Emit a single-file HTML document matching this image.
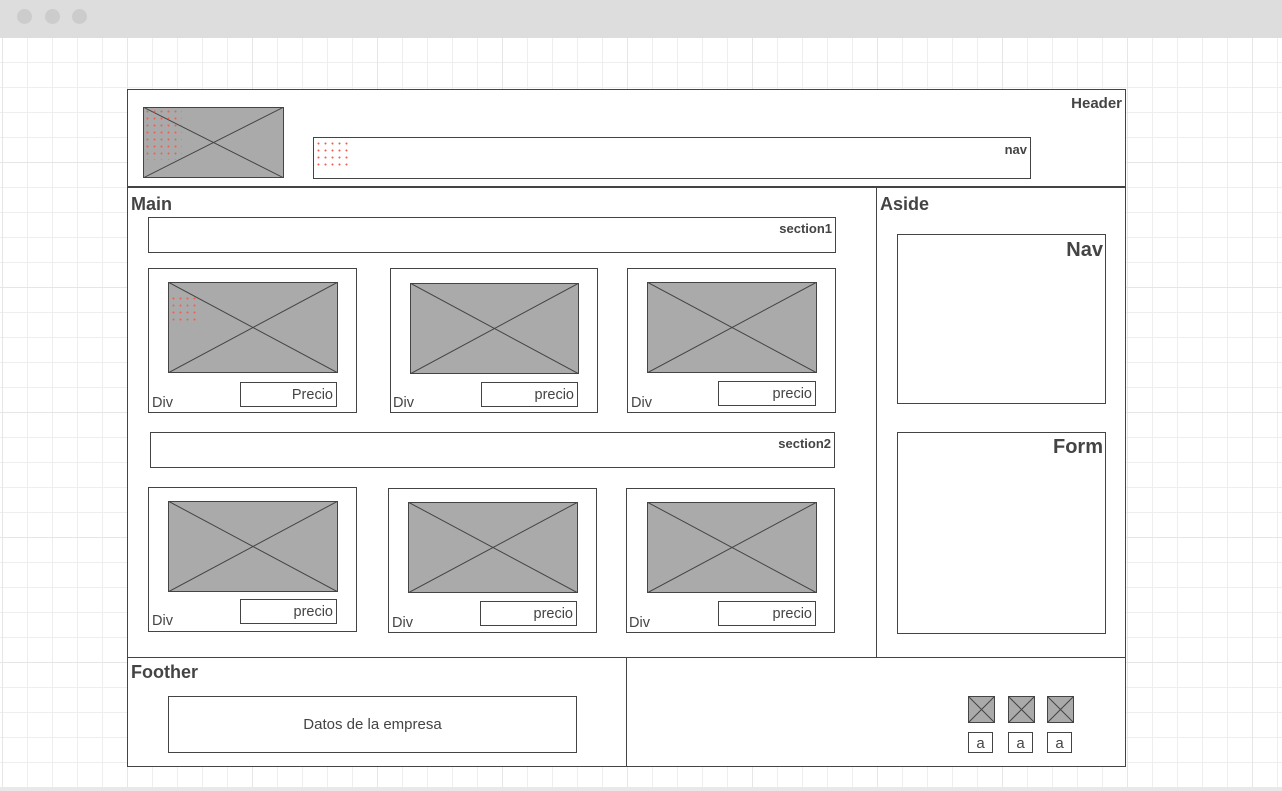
<!DOCTYPE html>
<html><head><meta charset="utf-8"><style>
*{margin:0;padding:0;box-sizing:border-box}
body{width:1282px;height:791px;overflow:hidden;position:relative;font-family:"Liberation Sans",sans-serif;color:#444;
background-color:#fff;
background-image:linear-gradient(#e6e6e6 1px,transparent 1px),linear-gradient(90deg,#e6e6e6 1px,transparent 1px),linear-gradient(#eeeeee 1px,transparent 1px),linear-gradient(90deg,#eeeeee 1px,transparent 1px);
background-size:125px 125px,125px 125px,25px 25px,25px 25px;
background-position:127px 162px,127px 162px,2px 12px,2px 12px;}
.top{position:absolute;left:0;top:0;width:1282px;height:38px;background:#ddd}
.dot{position:absolute;top:9px;width:15px;height:15px;border-radius:50%;background:#ccc}
.bot{position:absolute;left:0;top:787px;width:1282px;height:4px;background:#e8e8e8}
.b{position:absolute;border:1px solid #444;background:#fff}
.t{position:absolute;font-weight:bold;white-space:nowrap}
.r{position:absolute;font-weight:bold;white-space:nowrap;text-align:right}
.img{position:absolute}
.p{position:absolute;border:1px solid #444;background:#fff;font-size:14.5px;text-align:right;padding-right:3px;line-height:24px}
.d{position:absolute;font-size:14.5px}
.dots{position:absolute;background-image:radial-gradient(circle,#f06050 0.8px,transparent 1.2px);background-size:7px 7px}
</style></head><body>
<div class="top"><div class="dot" style="left:17px"></div><div class="dot" style="left:45px"></div><div class="dot" style="left:72px"></div></div>
<div class="bot"></div>

<div class="b" style="left:127px;top:89px;width:999px;height:678px"></div>
<div style="position:absolute;left:127px;top:186px;width:999px;height:2px;background:#444"></div>
<div style="position:absolute;left:876px;top:187px;width:1px;height:470px;background:#444"></div>
<div style="position:absolute;left:127px;top:657px;width:999px;height:1px;background:#444"></div>
<div style="position:absolute;left:626px;top:657px;width:1px;height:110px;background:#444"></div>

<svg class="img" style="left:143px;top:107px" width="141" height="71"><rect x=".5" y=".5" width="140" height="70" fill="#aaa" stroke="#444"/><path d="M0 0L141 71M0 71L141 0" stroke="#444"/></svg>
<div class="dots" style="left:144px;top:108px;width:38px;height:52px"></div>
<div class="r" style="right:160px;top:95px;font-size:15px">Header</div>
<div class="b" style="left:313px;top:137px;width:718px;height:42px"></div>
<div class="dots" style="left:315px;top:140px;width:37px;height:30px"></div>
<div class="r" style="right:255px;top:142px;font-size:13px">nav</div>

<div class="t" style="left:131px;top:194px;font-size:18px">Main</div>
<div class="t" style="left:880px;top:194px;font-size:18px">Aside</div>

<div class="b" style="left:148px;top:217px;width:688px;height:36px"></div>
<div class="r" style="right:450px;top:221px;font-size:13px">section1</div>
<div class="b" style="left:150px;top:432px;width:685px;height:36px"></div>
<div class="r" style="right:451px;top:436px;font-size:13px">section2</div>

<!-- row1 -->
<div class="b" style="left:148px;top:268px;width:209px;height:145px"></div>
<div class="b" style="left:390px;top:268px;width:208px;height:145px"></div>
<div class="b" style="left:627px;top:268px;width:209px;height:145px"></div>
<svg class="img" style="left:168px;top:282px" width="170" height="91"><rect x=".5" y=".5" width="169" height="90" fill="#aaa" stroke="#444"/><path d="M0 0L170 91M0 91L170 0" stroke="#444"/></svg>
<div class="dots" style="left:170px;top:295px;width:30px;height:28px"></div>
<svg class="img" style="left:410px;top:283px" width="169" height="91"><rect x=".5" y=".5" width="168" height="90" fill="#aaa" stroke="#444"/><path d="M0 0L169 91M0 91L169 0" stroke="#444"/></svg>
<svg class="img" style="left:647px;top:282px" width="170" height="91"><rect x=".5" y=".5" width="169" height="90" fill="#aaa" stroke="#444"/><path d="M0 0L170 91M0 91L170 0" stroke="#444"/></svg>
<div class="p" style="left:240px;top:382px;width:97px;height:25px">Precio</div>
<div class="p" style="left:481px;top:382px;width:97px;height:25px">precio</div>
<div class="p" style="left:718px;top:381px;width:98px;height:25px">precio</div>
<div class="d" style="left:152px;top:395px">Div</div>
<div class="d" style="left:393px;top:395px">Div</div>
<div class="d" style="left:631px;top:395px">Div</div>

<!-- row2 -->
<div class="b" style="left:148px;top:487px;width:209px;height:145px"></div>
<div class="b" style="left:388px;top:488px;width:209px;height:145px"></div>
<div class="b" style="left:626px;top:488px;width:209px;height:145px"></div>
<svg class="img" style="left:168px;top:501px" width="170" height="91"><rect x=".5" y=".5" width="169" height="90" fill="#aaa" stroke="#444"/><path d="M0 0L170 91M0 91L170 0" stroke="#444"/></svg>
<svg class="img" style="left:408px;top:502px" width="170" height="91"><rect x=".5" y=".5" width="169" height="90" fill="#aaa" stroke="#444"/><path d="M0 0L170 91M0 91L170 0" stroke="#444"/></svg>
<svg class="img" style="left:647px;top:502px" width="170" height="91"><rect x=".5" y=".5" width="169" height="90" fill="#aaa" stroke="#444"/><path d="M0 0L170 91M0 91L170 0" stroke="#444"/></svg>
<div class="p" style="left:240px;top:599px;width:97px;height:25px">precio</div>
<div class="p" style="left:480px;top:601px;width:97px;height:25px">precio</div>
<div class="p" style="left:718px;top:601px;width:98px;height:25px">precio</div>
<div class="d" style="left:152px;top:613px">Div</div>
<div class="d" style="left:392px;top:615px">Div</div>
<div class="d" style="left:629px;top:615px">Div</div>

<!-- aside -->
<div class="b" style="left:897px;top:234px;width:209px;height:170px"></div>
<div class="r" style="right:179px;top:239px;font-size:20px">Nav</div>
<div class="b" style="left:897px;top:432px;width:209px;height:202px"></div>
<div class="r" style="right:179px;top:436px;font-size:20px">Form</div>

<!-- footer -->
<div class="t" style="left:131px;top:662px;font-size:18px">Foother</div>
<div class="b" style="left:168px;top:696px;width:409px;height:57px;text-align:center;line-height:55px;font-size:15px">Datos de la empresa</div>
<svg class="img" style="left:968px;top:696px" width="27" height="27"><rect x=".5" y=".5" width="26" height="26" fill="#aaa" stroke="#444"/><path d="M0 0L27 27M0 27L27 0" stroke="#444"/></svg>
<svg class="img" style="left:1008px;top:696px" width="27" height="27"><rect x=".5" y=".5" width="26" height="26" fill="#aaa" stroke="#444"/><path d="M0 0L27 27M0 27L27 0" stroke="#444"/></svg>
<svg class="img" style="left:1047px;top:696px" width="27" height="27"><rect x=".5" y=".5" width="26" height="26" fill="#aaa" stroke="#444"/><path d="M0 0L27 27M0 27L27 0" stroke="#444"/></svg>
<div class="b" style="left:968px;top:732px;width:25px;height:21px;text-align:center;font-size:15px;line-height:22px">a</div>
<div class="b" style="left:1008px;top:732px;width:25px;height:21px;text-align:center;font-size:15px;line-height:22px">a</div>
<div class="b" style="left:1047px;top:732px;width:25px;height:21px;text-align:center;font-size:15px;line-height:22px">a</div>
</body></html>
